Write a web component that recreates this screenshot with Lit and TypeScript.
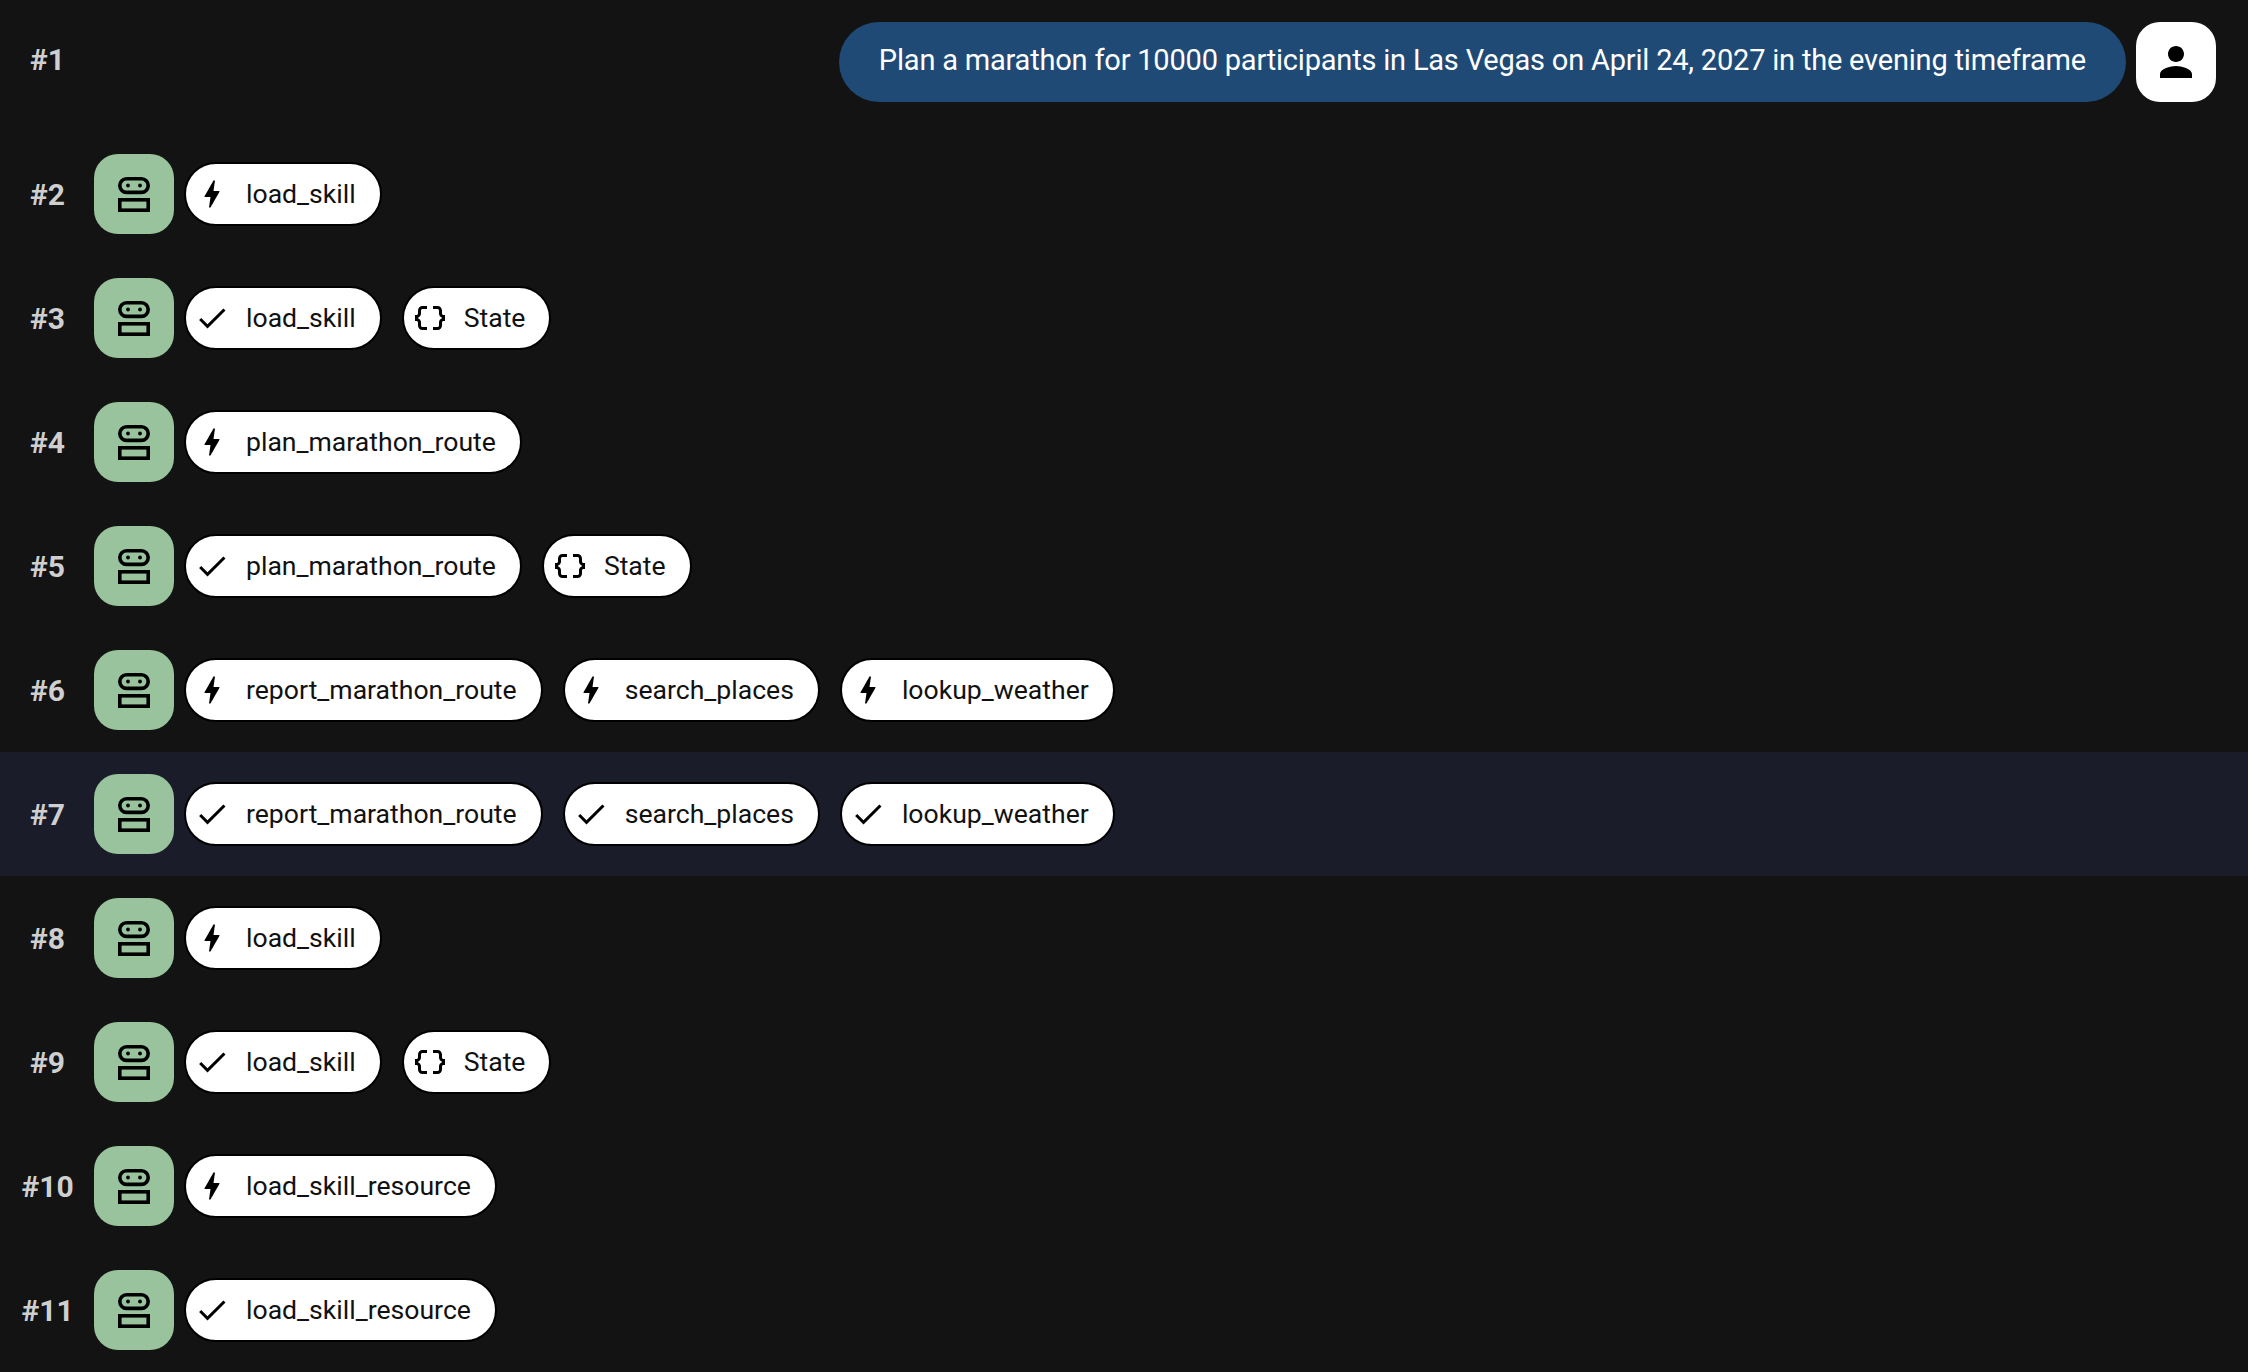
import { LitElement, html, css, svg } from "lit";
import { customElement } from "lit/decorators.js";

type Chip = { kind: "bolt" | "check" | "state"; label: string };
const bolt = (label: string): Chip => ({ kind: "bolt", label });
const check = (label: string): Chip => ({ kind: "check", label });
const state: Chip = { kind: "state", label: "State" };

const ROWS: { n: number; chips: Chip[]; active?: boolean }[] = [
  { n: 2, chips: [bolt("load_skill")] },
  { n: 3, chips: [check("load_skill"), state] },
  { n: 4, chips: [bolt("plan_marathon_route")] },
  { n: 5, chips: [check("plan_marathon_route"), state] },
  { n: 6, chips: [bolt("report_marathon_route"), bolt("search_places"), bolt("lookup_weather")] },
  { n: 7, active: true, chips: [check("report_marathon_route"), check("search_places"), check("lookup_weather")] },
  { n: 8, chips: [bolt("load_skill")] },
  { n: 9, chips: [check("load_skill"), state] },
  { n: 10, chips: [bolt("load_skill_resource")] },
  { n: 11, chips: [check("load_skill_resource")] },
];

const PATHS = {
  bolt: "M11 21h-1l1-7H7.5c-.58 0-.57-.32-.38-.66.19-.34.05-.08.07-.12C8.48 10.94 10.42 7.54 13 3h1l-1 7h3.5c.49 0 .56.33.47.51l-.07.15C12.96 17.55 11 21 11 21z",
  check: "M9 16.17L4.83 12l-1.42 1.41L9 19 21 7l-1.41-1.41z",
  state:
    "M4 7v2c0 .55-.45 1-1 1H2v4h1c.55 0 1 .45 1 1v2c0 1.65 1.35 3 3 3h3v-2H7c-.55 0-1-.45-1-1v-2c0-1.3-.84-2.42-2-2.83v-.34C5.16 11.42 6 10.3 6 9V7c0-.55.45-1 1-1h3V4H7C5.35 4 4 5.35 4 7zM21 10c-.55 0-1-.45-1-1V7c0-1.65-1.35-3-3-3h-3v2h3c.55 0 1 .45 1 1v2c0 1.3.84 2.42 2 2.83v.34c-1.16.41-2 1.52-2 2.83v2c0 .55-.45 1-1 1h-3v2h3c1.65 0 3-1.35 3-3v-2c0-.55.45-1 1-1h1v-4h-1z",
};

@customElement("app-root")
export class AppRoot extends LitElement {
  static styles = css`
    :host {
      display: block;
      width: 2248px;
      height: 1372px;
      background: #131313;
      font-family: Roboto, "Liberation Sans", sans-serif;
      overflow: hidden;
    }
    .row {
      display: flex;
      align-items: center;
      height: 124px;
      box-sizing: border-box;
      padding-right: 32px;
    }
    .row.first {
      height: 132px;
      align-items: flex-start;
      padding-top: 22px;
    }
    .row.active {
      background: #1a1c29;
    }
    .num {
      flex: 0 0 94px;
      box-sizing: border-box;
      padding: 1px 0 0 1px;
      text-align: center;
      color: #cfcfcf;
      font-size: 30px;
      font-weight: 700;
      line-height: 32px;
    }
    .first .num {
      line-height: 74px;
    }
    .avatar {
      flex: 0 0 80px;
      width: 80px;
      height: 80px;
      border-radius: 24px;
      display: flex;
      align-items: center;
      justify-content: center;
    }
    .avatar.bot {
      background: #98c39c;
    }
    .avatar.user {
      background: #ffffff;
    }
    .chips {
      display: flex;
      align-items: center;
      gap: 20px;
      margin-left: 10px;
    }
    .chip {
      display: flex;
      align-items: center;
      gap: 16px;
      height: 60px;
      padding: 0 24px 0 8px;
      background: #ffffff;
      border: 2px solid #000000;
      border-radius: 32px;
      color: #111111;
      font-size: 26.6px;
      line-height: 36px;
      white-space: nowrap;
    }
    .icon {
      flex: 0 0 36px;
      width: 36px;
      height: 36px;
      display: block;
    }
    .spacer {
      flex: 1;
    }
    .bubble {
      height: 80px;
      box-sizing: border-box;
      padding: 0 40px 4px;
      display: flex;
      align-items: center;
      background: #1f4a75;
      color: #ffffff;
      border-radius: 40px;
      font-size: 29px;
      letter-spacing: -0.2px;
      white-space: nowrap;
      margin-right: 10px;
    }
  `;

  private botIcon() {
    return html`<svg width="48" height="48" viewBox="0 0 48 48" fill="none" stroke="#000" stroke-width="3.6">
      <rect x="9.8" y="8.8" width="28.4" height="13.6" rx="6.8"></rect>
      <rect x="9.8" y="29.8" width="28.4" height="10.4"></rect>
      <circle cx="18" cy="15.5" r="1.9" fill="#000" stroke="none"></circle>
      <circle cx="30" cy="15.5" r="1.9" fill="#000" stroke="none"></circle>
    </svg>`;
  }

  private chip(c: Chip) {
    return html`<div class="chip">
      <svg class="icon" viewBox="0 0 24 24" fill="#000">${svg`<path d=${PATHS[c.kind]}></path>`}</svg>
      <span>${c.label}</span>
    </div>`;
  }

  render() {
    return html`
      <div class="row first">
        <div class="num">#1</div>
        <div class="spacer"></div>
        <div class="bubble">Plan a marathon for 10000 participants in Las Vegas on April 24, 2027 in the evening timeframe</div>
        <div class="avatar user">
          <svg width="48" height="48" viewBox="0 0 24 24" fill="#000">
            <path d="M12 12c2.21 0 4-1.79 4-4s-1.79-4-4-4-4 1.79-4 4 1.79 4 4 4zm0 2c-2.67 0-8 1.34-8 4v2h16v-2c0-2.66-5.33-4-8-4z"></path>
          </svg>
        </div>
      </div>
      ${ROWS.map(
        (r) => html`<div class="row ${r.active ? "active" : ""}">
          <div class="num">#${r.n}</div>
          <div class="avatar bot">${this.botIcon()}</div>
          <div class="chips">${r.chips.map((c) => this.chip(c))}</div>
        </div>`
      )}
    `;
  }
}
